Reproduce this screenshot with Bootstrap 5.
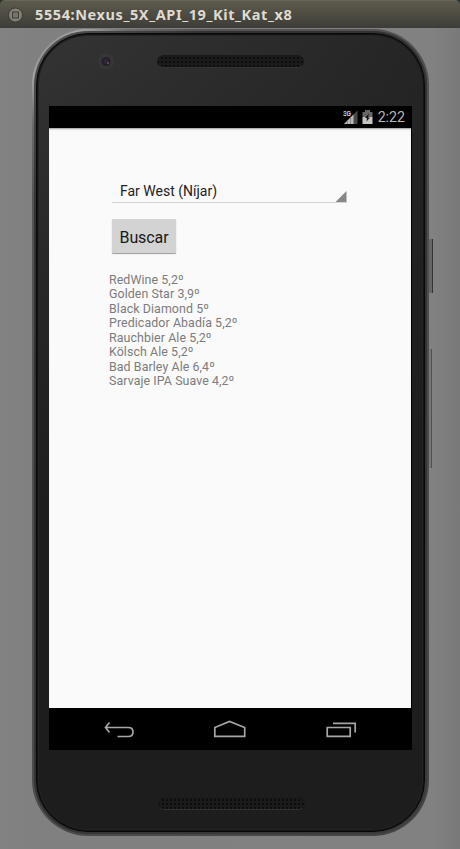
<!DOCTYPE html>
<html lang="es">
<head>
<meta charset="utf-8">
<meta name="viewport" content="width=device-width, initial-scale=1">
<title>5554:Nexus_5X_API_19_Kit_Kat_x8</title>
<link href="https://cdn.jsdelivr.net/npm/bootstrap@5.3.0/dist/css/bootstrap.min.css" rel="stylesheet">
<style>
html,body{height:849px;overflow:hidden}
body{width:460px;background:#808080;font-family:Roboto,sans-serif}
.titlebar{height:28px;background:linear-gradient(#5b584c 0,#59564a 15%,#3d3c37 100%);border-radius:5px 5px 0 0;padding-left:8px;border-top:1px solid #68655a}
.title-wrap{background:#26332c;height:28px}
.win-name{font:700 14.5px/27px "Noto Sans",sans-serif;color:#dfdbd2;margin-left:12px;white-space:nowrap;letter-spacing:.59px}
.backdrop{height:821px;padding:1px 0 0 32px;background:linear-gradient(90deg,#828282 0,#808080 8%,#818181 94%,#797979 100%)}
.phone{width:397px;height:807px;border-radius:56px;padding:2px;background:linear-gradient(135deg,#777 0,#a4a4a4 4%,#6c6b6b 8%,#555354 14%,#4e4c4d 60%,#454344 100%)}
.rim{height:803px;border-radius:54px;padding:2px;background:linear-gradient(135deg,#555 0,#333132 15%,#343233 60%,#3c3a3b)}
.face{height:799px;border-radius:52px;border:1px solid #080808;box-shadow:inset 0 0 0 1px #131313,inset 0 0 0 2px #242424;background:linear-gradient(180deg,rgba(29,29,30,0) 0,#1d1d1e 60%),linear-gradient(100deg,#343435,#202020)}
.top-area{height:72px;padding:19px 0 0 60px}
.speaker{width:147px;height:13px;border-radius:7px;border:1px solid #191919;border-bottom-color:#333;background:radial-gradient(circle,#0a0a0a .6px,#1b1b1b 1.3px) 2px 0/4px 4px}
.earpiece{margin:2px 0 0 42px}
.screen{width:363px;height:644px;margin-left:12px;background:#000}
.statusbar{height:22px;padding-right:7px;color:#b8b8b8;font-size:14.2px;line-height:22px}
.clock{margin-left:5px}
.content-area{width:362px;height:580px;background:#fafafa;box-shadow:inset 0 2px 2px -1px #999;padding:50px 0 0 60px;color:#222}
.spinner-field{width:235px;height:25px;margin-left:3px;border-bottom:1px solid #d4d4d4;font-size:14px;line-height:22px;padding-left:8px}
.buscar{margin:16px 0 0 3px;width:64px;height:34px;padding:0;border:0;border-radius:1px;background:#d3d3d3;box-shadow:0 1px 1px #999;color:#181818;font-size:16px;font-weight:400;line-height:37px;letter-spacing:-.1px}
.beers{margin-top:20px;font-size:12.4px;line-height:14.43px;color:#7c7c7c;letter-spacing:.08px}
.bottom-area{padding:47px 0 0 121px}
.side-keys{padding-top:210px}
.key-power{width:4px;height:54px;background:#666;border-right:1px solid #333}
.key-vol{width:3px;height:119px;margin-top:56px;background:#777;border-right:1px solid #505050}
</style>
<script src="https://cdn.jsdelivr.net/npm/bootstrap@5.3.0/dist/js/bootstrap.bundle.min.js"></script>
</head>
<body>
<div class="title-wrap">
<header class="titlebar d-flex align-items-center">
<svg width="15" height="16" viewBox="0 0 15 16"><circle cx="7.5" cy="8" r="7" fill="#858177" stroke="#3b3a35"/><rect x="4.5" y="5" width="6" height="6" fill="#77746a" stroke="#3e3d38"/></svg>
<div class="win-name">5554:Nexus_5X_API_19_Kit_Kat_x8</div>
</header>
</div>
<main class="backdrop d-flex align-items-start">
<div class="phone flex-shrink-0"><div class="rim"><div class="face">
<div class="top-area d-flex align-items-start">
<svg width="18" height="18" viewBox="0 0 18 18"><circle cx="9" cy="8.500" r="8" fill="#363637"/><circle cx="9" cy="8.500" r="4.600" fill="#222226"/><circle cx="9" cy="8.500" r="2.500" fill="#2c2738"/><circle cx="11" cy="10" r="1" fill="#74505f"/></svg>
<div class="speaker earpiece"></div>
</div>
<div class="screen">
<div class="statusbar d-flex align-items-center justify-content-end">
<svg width="15" height="16" viewBox="0 0 15 16"><path d="M14.500 1.500V15H1z" fill="#484848"/><path d="M10.500 5.500V15H1z" fill="#bbb"/><path d="M4.500 11v4M7.500 8v7" stroke="#777" stroke-width=".7"/><text x="0" y="6.500" font-family="Roboto" font-size="7" font-weight="700" fill="#ccc" stroke="#000" stroke-width="1.500" paint-order="stroke" textLength="8">3G</text></svg>
<svg class="ms-1" width="11" height="16" viewBox="0 0 11 16"><path d="M3 1h5v2h2.500v5H.5V3H3z" fill="#666"/><path d="M.5 8h10v7H.5z" fill="#c4c4c4"/><path d="M7 4.500 3 9h2l-.5 3.500L8 8.500H6z" fill="#111"/></svg>
<span class="clock">2:22</span>
</div>
<div class="content-area">
<div class="spinner-field d-flex justify-content-between align-items-end"><span>Far West (Níjar)</span><svg width="12" height="12" viewBox="0 0 12 12"><path d="M11.500 1v11H.5z" fill="#888"/></svg></div>
<button class="buscar btn d-block" type="button">Buscar</button>
<div class="beers">RedWine 5,2º<br>Golden Star 3,9º<br>Black Diamond 5º<br>Predicador Abadía 5,2º<br>Rauchbier Ale 5,2º<br>Kölsch Ale 5,2º<br>Bad Barley Ale 6,4º<br>Sarvaje IPA Suave 4,2º</div>
</div>
<svg class="d-block" width="363" height="42" viewBox="49 708 363 42" fill="none" stroke="#a6a6a6" stroke-width="1.700"><path d="M109.500 722.500 105.500 727.500 109.500 732.500M105.500 727.500H128.500Q133 727.500 133 732T128.500 736.500H117.500"/><path d="M214.800 736.300V727.500L229.500 721.500 244.700 727.500V736.300Z"/><path d="M327.200 727.500H350.200V736.300H327.200ZM333 723.300H355.200V732.500"/></svg>
</div>
<div class="bottom-area"><div class="speaker"></div></div>
</div></div></div>
<div class="side-keys"><div class="key-power"></div><div class="key-vol"></div></div>
</main>
</body>
</html>
